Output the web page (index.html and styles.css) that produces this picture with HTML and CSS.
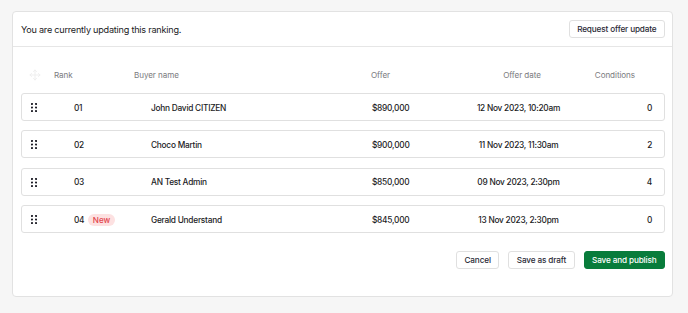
FILE: index.html
```html
<!DOCTYPE html>
<html lang="en">
<head>
<meta charset="utf-8">
<title>Ranking</title>
<link rel="stylesheet" href="styles.css">
</head>
<body>
<div class="card">
  <div class="card-header">
    <span class="notice">You are currently updating this ranking.</span>
    <button class="btn">Request offer update</button>
  </div>
  <div class="card-body">
    <div class="thead">
      <span class="th th-icon">
        <svg width="12" height="12" viewBox="0 0 12 12" fill="none" stroke="#efefef" stroke-width="1" stroke-linecap="round" stroke-linejoin="round">
          <path d="M6 1v10M1 6h10M4.5 2.5L6 1l1.5 1.5M4.5 9.5L6 11l1.5-1.5M2.5 4.5L1 6l1.5 1.5M9.5 4.5L11 6l-1.5 1.5"/>
        </svg>
      </span>
      <span class="th">Rank</span>
      <span class="th">Buyer name</span>
      <span class="th">Offer</span>
      <span class="th th-center">Offer date</span>
      <span class="th th-right">Conditions</span>
    </div>
    <div class="rows">
      <div class="row">
        <span class="handle"><svg width="6" height="9" viewBox="0 0 6 9"><g fill="#1b1b24"><circle cx="1" cy="1" r="1.05"/><circle cx="5" cy="1" r="1.05"/><circle cx="1" cy="4.5" r="1.05"/><circle cx="5" cy="4.5" r="1.05"/><circle cx="1" cy="8" r="1.05"/><circle cx="5" cy="8" r="1.05"/></g></svg></span>
        <span class="cell">01</span>
        <span class="cell">John David CITIZEN</span>
        <span class="cell">$890,000</span>
        <span class="cell cell-center">12 Nov 2023, 10:20am</span>
        <span class="cell cell-right">0</span>
      </div>
      <div class="row">
        <span class="handle"><svg width="6" height="9" viewBox="0 0 6 9"><g fill="#1b1b24"><circle cx="1" cy="1" r="1.05"/><circle cx="5" cy="1" r="1.05"/><circle cx="1" cy="4.5" r="1.05"/><circle cx="5" cy="4.5" r="1.05"/><circle cx="1" cy="8" r="1.05"/><circle cx="5" cy="8" r="1.05"/></g></svg></span>
        <span class="cell">02</span>
        <span class="cell">Choco Martin</span>
        <span class="cell">$900,000</span>
        <span class="cell cell-center">11 Nov 2023, 11:30am</span>
        <span class="cell cell-right">2</span>
      </div>
      <div class="row">
        <span class="handle"><svg width="6" height="9" viewBox="0 0 6 9"><g fill="#1b1b24"><circle cx="1" cy="1" r="1.05"/><circle cx="5" cy="1" r="1.05"/><circle cx="1" cy="4.5" r="1.05"/><circle cx="5" cy="4.5" r="1.05"/><circle cx="1" cy="8" r="1.05"/><circle cx="5" cy="8" r="1.05"/></g></svg></span>
        <span class="cell">03</span>
        <span class="cell">AN Test Admin</span>
        <span class="cell">$850,000</span>
        <span class="cell cell-center">09 Nov 2023, 2:30pm</span>
        <span class="cell cell-right">4</span>
      </div>
      <div class="row">
        <span class="handle"><svg width="6" height="9" viewBox="0 0 6 9"><g fill="#1b1b24"><circle cx="1" cy="1" r="1.05"/><circle cx="5" cy="1" r="1.05"/><circle cx="1" cy="4.5" r="1.05"/><circle cx="5" cy="4.5" r="1.05"/><circle cx="1" cy="8" r="1.05"/><circle cx="5" cy="8" r="1.05"/></g></svg></span>
        <span class="cell rank-new">04 <span class="badge">New</span></span>
        <span class="cell">Gerald Understand</span>
        <span class="cell">$845,000</span>
        <span class="cell cell-center">13 Nov 2023, 2:30pm</span>
        <span class="cell cell-right">0</span>
      </div>
    </div>
    <div class="actions">
      <button class="btn">Cancel</button>
      <button class="btn">Save as draft</button>
      <button class="btn btn-primary">Save and publish</button>
    </div>
  </div>
</div>
</body>
</html>
```

FILE: styles.css
```css
* { box-sizing: border-box; }

html, body {
  margin: 0;
  background: #f6f6f6;
}

body {
  padding: 11px 15px 0 12px;
  font-family: Inter, "Noto Sans", sans-serif;
  color: #1b1b24;
}

.card {
  width: 661px;
  height: 286px;
  background: #ffffff;
  border: 1px solid #e2e2e2;
  border-radius: 4px;
}

.card-header {
  height: 35px;
  display: flex;
  align-items: center;
  justify-content: space-between;
  padding: 0 7px 0 8px;
  border-bottom: 1px solid #e6e6e6;
}

.notice {
  font-size: 9.1px;
  letter-spacing: -0.22px;
  color: #1b1b24;
}

.btn {
  height: 18px;
  padding: 0 7.5px;
  font-family: Inter, "Noto Sans", sans-serif;
  font-size: 8.2px;
  font-weight: 500;
  letter-spacing: -0.14px;
  color: #2a2a36;
  background: #ffffff;
  border: 1px solid #e0e0e0;
  border-radius: 3px;
  cursor: pointer;
}

.card-body {
  padding: 17px 7px 0 8px;
}

.thead {
  display: grid;
  grid-template-columns: 33px 80px 237px 89px 124px 51px;
  height: 20px;
  align-items: center;
  margin-bottom: 9px;
  padding-top: 1px;
}

.th {
  font-size: 8.1px;
  letter-spacing: -0.08px;
  color: #7b7b80;
}

.th-icon {
  display: flex;
  align-items: center;
  padding-left: 8px;
}

.th-center { text-align: center; }
.th-right { text-align: right; }

.rows {
  display: flex;
  flex-direction: column;
  gap: 9.4px;
}

.row {
  display: grid;
  grid-template-columns: 43px 77px 221px 89px 115px 76px;
  align-items: center;
  height: 28px;
  padding: 1px 13px 0 9px;
  border: 1px solid #e0e0e0;
  border-radius: 3px;
  background: #ffffff;
}

.handle {
  display: flex;
  align-items: center;
}

.cell {
  font-size: 8.3px;
  font-weight: 550;
  letter-spacing: -0.24px;
  color: #1b1b24;
  white-space: nowrap;
}

.cell-center { text-align: center; }
.cell-right { text-align: right; }

.rank-new {
  display: flex;
  align-items: center;
  gap: 4px;
}

.badge {
  display: inline-flex;
  align-items: center;
  height: 12px;
  padding: 0 4.5px;
  border-radius: 6px;
  background: #fde1e1;
  color: #e2464e;
  font-size: 8.1px;
  font-weight: 500;
  letter-spacing: 0;
}

.actions {
  display: flex;
  justify-content: flex-end;
  gap: 9px;
  margin-top: 18px;
}

.btn-primary {
  background: #087c3b;
  border-color: #087c3b;
  color: #ffffff;
}
```
